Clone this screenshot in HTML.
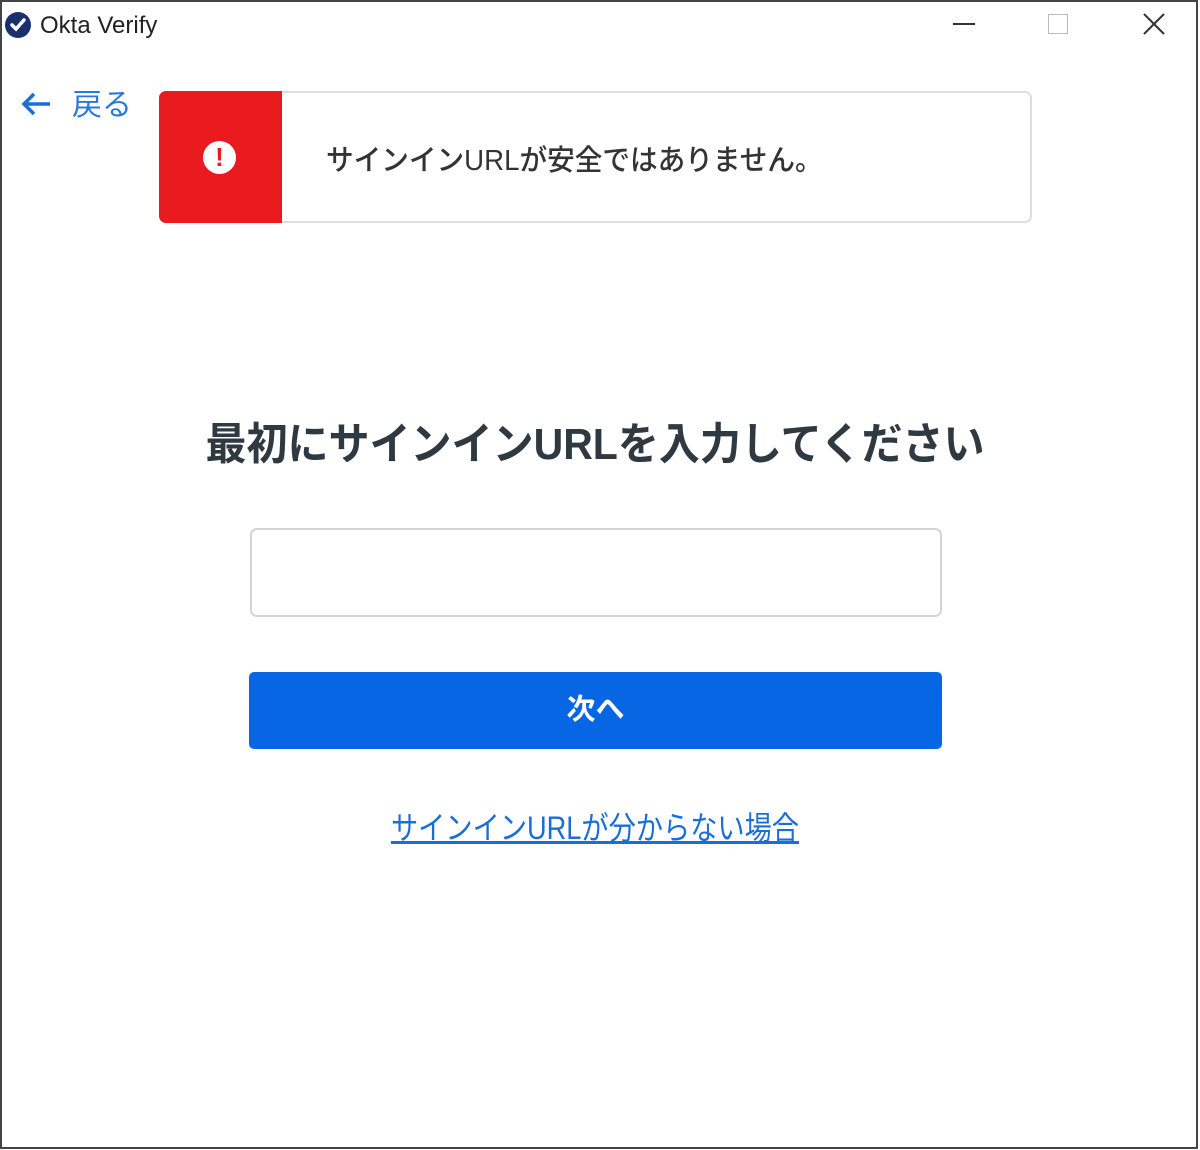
<!DOCTYPE html>
<html><head><meta charset="utf-8"><style>
*{margin:0;padding:0;box-sizing:border-box}
body{width:1200px;height:1150px;background:#fff;position:relative;overflow:hidden;font-family:"Liberation Sans","Noto Sans CJK JP",sans-serif}
.frame{position:absolute;left:0;top:0;width:1198px;height:1149px;border:2px solid #444}
.t{position:absolute;white-space:nowrap}
</style></head><body>
<div class="frame"></div>
<svg style="position:absolute;left:4px;top:11px" width="28" height="28" viewBox="0 0 28 28"><circle cx="14" cy="14" r="13" fill="#1a2f6e"/><path d="M8 14l4 4 8-9" stroke="#fff" stroke-width="3.5" fill="none" stroke-linecap="round"/></svg>
<div class="t" style="left:40px;top:12px;font-size:24px;color:#222">Okta Verify</div>
<div style="position:absolute;left:953px;top:23px;width:22px;height:2px;background:#333"></div>
<div style="position:absolute;left:1048px;top:14px;width:20px;height:20px;border:1.5px solid #bbb"></div>
<svg style="position:absolute;left:1143px;top:13px" width="22" height="22"><path d="M1 1L21 21M21 1L1 21" stroke="#333" stroke-width="2"/></svg>
<svg style="position:absolute;left:20px;top:92px" width="32" height="24"><path d="M30 12H4M14 2L4 12l10 10" stroke="#1a6fd6" stroke-width="3.5" fill="none"/></svg>
<div class="t" style="left:72px;top:80px;font-size:30px;color:#2a78dc">戻る</div>
<div style="position:absolute;left:159px;top:91px;width:873px;height:132px;border:2px solid #ddd;border-radius:7px"></div>
<div style="position:absolute;left:159px;top:91px;width:123px;height:132px;background:#ea1b1f;border-radius:7px 0 0 7px"></div>
<div style="position:absolute;left:203px;top:141px;width:33px;height:33px;border-radius:50%;background:#fff;color:#ea1b1f;font-weight:bold;font-size:26px;text-align:center;line-height:33px">!</div>
<div class="t" style="left:326px;top:137px;font-size:29px;font-weight:500;color:#333;transform:scaleX(0.953);transform-origin:left">サインインURLが安全ではありません。</div>
<div class="t" style="left:0;width:1190px;text-align:center;top:408px;font-size:44px;font-weight:bold;color:#2e3942;transform:scaleX(0.932)">最初にサインインURLを入力してください</div>
<div style="position:absolute;left:250px;top:528px;width:692px;height:89px;border:2px solid #d4d4d4;border-radius:7px"></div>
<div style="position:absolute;left:249px;top:672px;width:693px;height:77px;background:#0766e3;border-radius:5px;color:#fff;font-size:29px;font-weight:bold;text-align:center;line-height:77px">次へ</div>
<div class="t" style="left:0;width:1190px;text-align:center;top:803px;font-size:32px;color:#1a6fd6;transform:scaleX(0.85)"><span style="text-decoration:underline">サインインURLが分からない場合</span></div>
</body></html>
